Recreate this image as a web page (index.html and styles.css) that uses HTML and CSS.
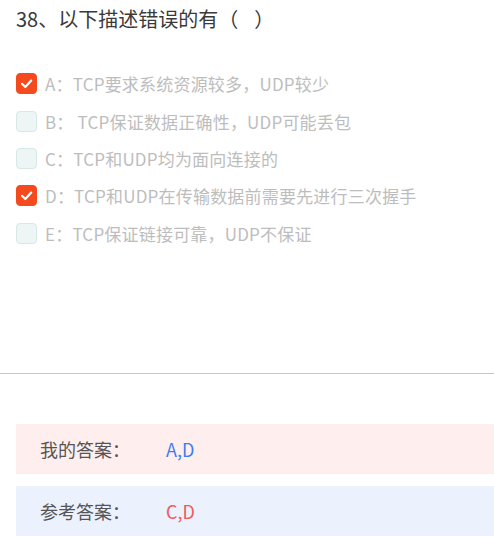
FILE: index.html
```html
<!DOCTYPE html>
<html lang="zh">
<head>
<meta charset="utf-8">
<link rel="stylesheet" href="styles.css">
</head>
<body>
<div class="question">
  <div class="title">38、以下描述错误的有（<span class="blank"></span>）</div>
  <ul class="options">
    <li class="option checked"><span class="box"><svg viewBox="0 0 21 21" width="21" height="21"><path d="M6 10.8 L9.3 14 L15.2 7.6" fill="none" stroke="#fff" stroke-width="2.2" stroke-linecap="round" stroke-linejoin="round"/></svg></span><span class="text">A：TCP要求系统资源较多，UDP较少</span></li>
    <li class="option"><span class="box"></span><span class="text">B： TCP保证数据正确性，UDP可能丢包</span></li>
    <li class="option"><span class="box"></span><span class="text">C：TCP和UDP均为面向连接的</span></li>
    <li class="option checked"><span class="box"><svg viewBox="0 0 21 21" width="21" height="21"><path d="M6 10.8 L9.3 14 L15.2 7.6" fill="none" stroke="#fff" stroke-width="2.2" stroke-linecap="round" stroke-linejoin="round"/></svg></span><span class="text">D：TCP和UDP在传输数据前需要先进行三次握手</span></li>
    <li class="option"><span class="box"></span><span class="text">E：TCP保证链接可靠，UDP不保证</span></li>
  </ul>
</div>
<hr class="divider">
<div class="answers">
  <div class="answer mine"><span class="label">我的答案：</span><span class="value">A,D</span></div>
  <div class="answer ref"><span class="label">参考答案：</span><span class="value">C,D</span></div>
</div>
</body>
</html>
```
FILE: styles.css
```css
html, body {
  margin: 0;
  padding: 0;
  background: #fff;
  font-family: "Noto Sans CJK SC", "Noto Sans", sans-serif;
}
.question {
  padding: 0 16px;
  height: 373px;
  box-sizing: border-box;
}
.title {
  padding-top: 5px;
  font-size: 20px;
  line-height: 28px;
  color: #3a3a3a;
}
.blank {
  display: inline-block;
  width: 16px;
}
.options {
  list-style: none;
  margin: 0;
  padding: 0;
  margin-top: 32px;
}
.option {
  display: flex;
  align-items: center;
  height: 37.4px;
}
.box {
  flex: none;
  width: 21px;
  height: 21px;
  box-sizing: border-box;
  border: 1px solid #d6e9e8;
  background: #eef6f5;
  border-radius: 4px;
  display: flex;
}
.checked .box {
  background: #f54a1e;
  border-color: #f54a1e;
}
.checked .box svg {
  margin: -1px;
}
.text {
  margin-left: 8px;
  font-size: 17px;
  color: #bdbdbd;
  white-space: nowrap;
  letter-spacing: 0.2px;
}
.divider {
  margin: 0;
  border: 0;
  border-top: 1px solid #c6c6c6;
  height: 0;
}
.answers {
  padding: 50px 0 0 16px;
  display: flex;
  flex-direction: column;
  gap: 12px;
}
.answer {
  height: 50px;
  display: flex;
  align-items: center;
  padding-left: 24px;
  font-size: 18px;
}
.mine { background: #ffeeee; }
.ref { background: #ebf1fd; }
.label {
  color: #555;
  width: 126px;
}
.mine .value { color: #3c7df0; }
.ref .value { color: #f5585c; }
```
